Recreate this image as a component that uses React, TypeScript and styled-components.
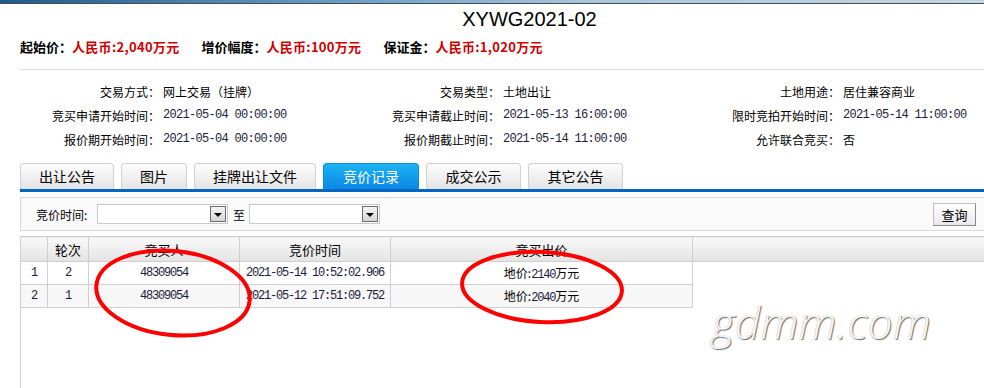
import React from "react";
import styled, { createGlobalStyle } from "styled-components";

const GlobalStyle = createGlobalStyle`
  html, body {
    margin: 0;
    padding: 0;
    background: #fff;
    overflow: hidden;
  }
  body {
    font-family: "Noto Sans CJK SC", "Liberation Sans", sans-serif;
    font-size: 12px;
    color: #000;
  }
`;

const cjk = `"Noto Sans CJK SC", "Liberation Sans", sans-serif`;
const mono = `"Liberation Mono", "DejaVu Sans Mono", monospace`;

const Page = styled.div`
  position: relative;
  width: 984px;
  height: 388px;
  overflow: hidden;
`;

const TopBar = styled.div`
  height: 3px;
  background: linear-gradient(to right, #1d5a8e, #5d95c4 30%, #a9c6dd 60%, #c4d6e4);
  border-bottom: 1px solid #4b4b4b;
`;

const Title = styled.h1`
  margin: 0;
  padding-left: 75px;
  font-family: "Liberation Sans", Arial, sans-serif;
  font-weight: normal;
  font-size: 20px;
  line-height: 30px;
  text-align: center;
`;

const PriceLine = styled.div`
  display: flex;
  gap: 22px;
  margin-top: 3px;
  padding-left: 20px;
  height: 20px;
  line-height: 20px;
  font-size: 13px;
  font-weight: bold;
`;

const Red = styled.span`
  color: #d00000;
  letter-spacing: 0.3px;
`;

const InfoGrid = styled.div`
  margin: 12px 0 0 20px;
  padding-top: 9px;
  border-top: 1px solid #dcdcdc;
  display: grid;
  grid-template-columns: repeat(3, 140px 200px);
  grid-auto-rows: 24px;
  align-items: center;
  font-size: 12px;
`;

const InfoLabel = styled.div`
  text-align: right;
  white-space: nowrap;
`;

const InfoValue = styled.div<{ $mono?: boolean }>`
  padding-left: 3px;
  white-space: nowrap;
  font-family: ${(p) => (p.$mono ? mono : cjk)};
  font-size: 12px;
  letter-spacing: ${(p) => (p.$mono ? "-0.7px" : "0")};
  color: ${(p) => (p.$mono ? "#1a1a3a" : "#000")};
`;

const TabBar = styled.div`
  display: flex;
  gap: 7px;
  margin: 12px 0 0 20px;
  border-bottom: 3px solid #0066c0;
`;

const Tab = styled.div<{ $w: number; $active?: boolean }>`
  width: ${(p) => p.$w}px;
  height: 26px;
  box-sizing: border-box;
  border: 1px solid ${(p) => (p.$active ? "#0a8be0" : "#d0d0d0")};
  border-bottom: none;
  border-radius: 4px 4px 0 0;
  text-align: center;
  font-size: 14px;
  line-height: 24px;
  color: ${(p) => (p.$active ? "#fff" : "#000")};
  background: ${(p) =>
    p.$active
      ? "linear-gradient(#1ab4f2, #0c86e8)"
      : "linear-gradient(#fdfdfd, #e4e4e4)"};
`;

const FilterBar = styled.div`
  margin: 5px 0 0 20px;
  height: 34px;
  box-sizing: border-box;
  border: 1px solid #d8d8d8;
  border-right: none;
  background: #fafafa;
  display: flex;
  align-items: center;
  padding: 0 8px 0 15px;
  font-size: 12px;
`;

const FilterLabel = styled.span`
  width: 61px;
`;

const Select = styled.div`
  width: 131px;
  height: 20px;
  box-sizing: border-box;
  border: 1px solid #c8c8c8;
  background: #fff;
  display: flex;
  justify-content: flex-end;
  align-items: center;
  padding-right: 1px;
`;

const SelectArrow = styled.div`
  width: 16px;
  height: 16px;
  box-sizing: border-box;
  border: 1px solid #6a6a6a;
  background: linear-gradient(#f4f4f4, #d6d6d6);
  display: flex;
  align-items: center;
  justify-content: center;

  &::after {
    content: "";
    margin-top: 1px;
    border-left: 4px solid transparent;
    border-right: 4px solid transparent;
    border-top: 4px solid #000;
  }
`;

const To = styled.span`
  margin: 0 4px 0 5px;
`;

const QueryButton = styled.button`
  margin-left: auto;
  width: 43px;
  height: 23px;
  padding: 0;
  border: 1px solid #9a9a9a;
  border-color: #c0c0c0 #8a8a8a #8a8a8a #c0c0c0;
  background: linear-gradient(#ffffff, #e9e9e9);
  font-family: ${cjk};
  font-size: 13px;
  color: #000;
`;

const TableArea = styled.div`
  margin: 5px 0 0 20px;
  height: 160px;
  border-left: 1px solid #cfcfcf;
`;

const Table = styled.table`
  width: 965px;
  margin-left: -1px;
  border-collapse: collapse;
  table-layout: fixed;
`;

const Th = styled.th<{ $w?: number }>`
  width: ${(p) => (p.$w ? `${p.$w}px` : "auto")};
  height: 24px;
  padding: 0;
  border: 1px solid #cfcfcf;
  background: linear-gradient(#f9f9f9, #e3e3e3);
  font-weight: normal;
  font-size: 13px;
  text-align: center;
`;

const Td = styled.td<{ $left?: boolean; $alt?: boolean; $mono?: boolean }>`
  height: 22px;
  padding: 0 0 0 ${(p) => (p.$left ? "10px" : "0")};
  border: 1px solid #cfcfcf;
  background: ${(p) => (p.$alt ? "#f7f7f7" : "#fff")};
  text-align: ${(p) => (p.$left ? "left" : "center")};
  font-family: ${(p) => (p.$mono ? mono : cjk)};
  font-size: 12px;
  letter-spacing: ${(p) => (p.$mono ? "-1.2px" : "0")};
  color: ${(p) => (p.$mono ? "#1a1a3a" : "#000")};
  white-space: nowrap;
`;

const Blank = styled.td`
  border: none;
  background: #fff;
`;

const Num = styled.span`
  font-family: ${mono};
  font-size: 12px;
  letter-spacing: -1.2px;
  color: #1a1a3a;
`;

const Marks = styled.svg`
  position: absolute;
  left: 0;
  top: 0;
  pointer-events: none;
`;

const Watermark = styled.div`
  position: absolute;
  left: 712px;
  top: 292px;
  font-family: "Open Sans", "DejaVu Sans", sans-serif;
  font-style: italic;
  font-weight: 300;
  font-size: 44px;
  letter-spacing: 0.5px;
  color: #f6f6f6;
  text-shadow: 1px 1px 1px #6a6a6a, -0.5px -0.5px 0 #d0d0d0;
`;

const info: [string, string, boolean][] = [
  ["交易方式：", "网上交易（挂牌）", false],
  ["交易类型：", "土地出让", false],
  ["土地用途：", "居住兼容商业", false],
  ["竞买申请开始时间：", "2021-05-04 00:00:00", true],
  ["竞买申请截止时间：", "2021-05-13 16:00:00", true],
  ["限时竞拍开始时间：", "2021-05-14 11:00:00", true],
  ["报价期开始时间：", "2021-05-04 00:00:00", true],
  ["报价期截止时间：", "2021-05-14 11:00:00", true],
  ["允许联合竞买：", "否", false],
];

const tabs: [string, number][] = [
  ["出让公告", 94],
  ["图片", 66],
  ["挂牌出让文件", 122],
  ["竞价记录", 96],
  ["成交公示", 95],
  ["其它公告", 95],
];

const rows = [
  { no: "1", round: "2", bidder: "48309054", time: "2021-05-14 10:52:02.906", price: "2140" },
  { no: "2", round: "1", bidder: "48309054", time: "2021-05-12 17:51:09.752", price: "2040" },
];

export default function App() {
  return (
    <Page>
      <GlobalStyle />
      <TopBar />
      <Title>XYWG2021-02</Title>
      <PriceLine>
        <span>
          起始价：<Red>人民币:2,040万元</Red>
        </span>
        <span>
          增价幅度：<Red>人民币:100万元</Red>
        </span>
        <span>
          保证金：<Red>人民币:1,020万元</Red>
        </span>
      </PriceLine>

      <InfoGrid>
        {info.map(([label, value, isMono]) => (
          <React.Fragment key={label}>
            <InfoLabel>{label}</InfoLabel>
            <InfoValue $mono={isMono}>{value}</InfoValue>
          </React.Fragment>
        ))}
      </InfoGrid>

      <TabBar>
        {tabs.map(([name, w]) => (
          <Tab key={name} $w={w} $active={name === "竞价记录"}>
            {name}
          </Tab>
        ))}
      </TabBar>

      <FilterBar>
        <FilterLabel>竞价时间:</FilterLabel>
        <Select>
          <SelectArrow />
        </Select>
        <To>至</To>
        <Select>
          <SelectArrow />
        </Select>
        <QueryButton>查询</QueryButton>
      </FilterBar>

      <TableArea>
        <Table>
          <thead>
            <tr>
              <Th $w={26}></Th>
              <Th $w={40}>轮次</Th>
              <Th $w={150}>竞买人</Th>
              <Th $w={150}>竞价时间</Th>
              <Th $w={301}>竞买出价</Th>
              <Th></Th>
            </tr>
          </thead>
          <tbody>
            {rows.map((r, i) => (
              <tr key={r.no}>
                <Td $left $alt={i % 2 === 1} $mono>
                  {r.no}
                </Td>
                <Td $alt={i % 2 === 1} $mono>
                  {r.round}
                </Td>
                <Td $alt={i % 2 === 1} $mono>
                  {r.bidder}
                </Td>
                <Td $alt={i % 2 === 1} $mono>
                  {r.time}
                </Td>
                <Td $alt={i % 2 === 1}>
                  地价:<Num>{r.price}</Num>万元
                </Td>
                <Blank />
              </tr>
            ))}
          </tbody>
        </Table>
      </TableArea>

      <Marks width="984" height="388" viewBox="0 0 984 388">
        <ellipse
          cx="173"
          cy="293"
          rx="77"
          ry="42"
          transform="rotate(6 173 293)"
          fill="none"
          stroke="#f00"
          strokeWidth="4"
        />
        <ellipse
          cx="542"
          cy="287"
          rx="80"
          ry="35"
          transform="rotate(3 542 287)"
          fill="none"
          stroke="#f00"
          strokeWidth="4"
        />
      </Marks>

      <Watermark>gdmm.com</Watermark>
    </Page>
  );
}
